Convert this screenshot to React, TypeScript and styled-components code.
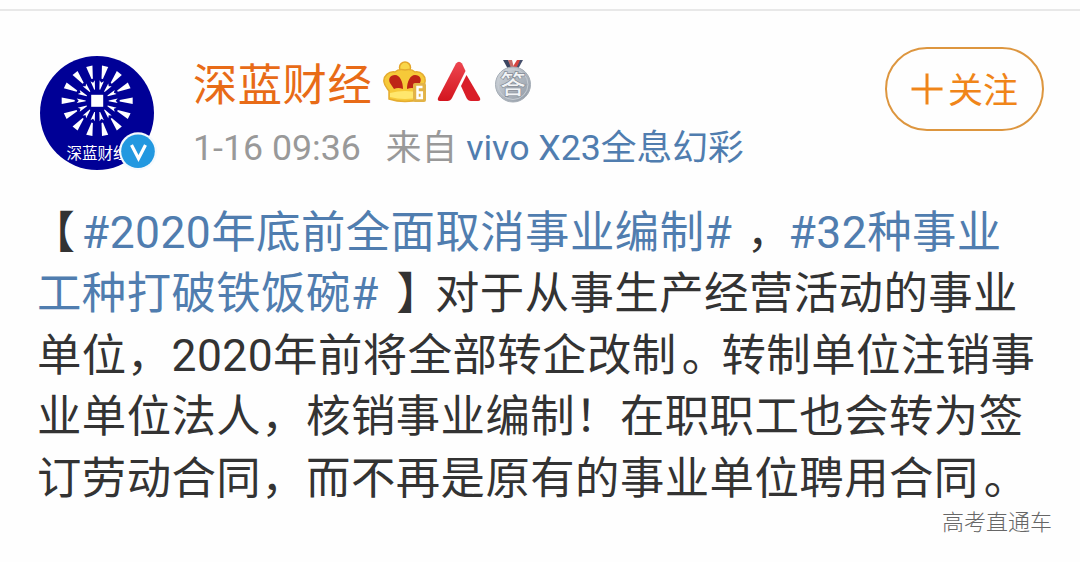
import React from "react";
import styled, { createGlobalStyle } from "styled-components";

const GlobalStyle = createGlobalStyle`
  * {
    box-sizing: border-box;
  }

  body {
    margin: 0;
    background: #fefefe;
    font-family: Roboto, "Noto Sans CJK SC", sans-serif;
  }
`;

const Page = styled.main`
  width: 1080px;
  height: 562px;
  overflow: hidden;
  display: flex;
  flex-direction: column;
`;

const Divider = styled.div`
  height: 2px;
  margin-top: 9px;
  flex-shrink: 0;
  background: #e8e8e8;
`;

const Header = styled.header`
  display: flex;
  height: 192px;
  padding: 36px 36px 0 39px;
  flex-shrink: 0;
`;

const Avatar = styled.svg`
  width: 120px;
  height: 130px;
  margin-top: 8px;
  flex-shrink: 0;
`;

const Author = styled.div`
  flex: 1;
  padding-left: 34px;
`;

const NameRow = styled.div`
  display: flex;
  align-items: center;
  height: 76px;
`;

const Name = styled.span`
  padding-top: 2px;
  font-size: 44.3px;
  letter-spacing: 0.5px;
  line-height: 76px;
  color: #e86b17;
  white-space: nowrap;
`;

const Badge = styled.svg<{ $gap: number }>`
  width: 44px;
  height: 44px;
  margin-left: ${({ $gap }) => $gap}px;
  margin-top: -6px;
  flex-shrink: 0;
`;

const Meta = styled.div`
  display: flex;
  height: 50px;
  line-height: 51px;
  font-size: 35.7px;
  color: #999;
  white-space: nowrap;
`;

const Source = styled.span`
  margin-left: 25px;
`;

const Link = styled.span`
  color: #507daf;
`;

const Device = styled(Link)`
  margin-left: 9px;
`;

const FollowButton = styled.button`
  display: flex;
  align-items: center;
  justify-content: center;
  gap: 5px;
  width: 159px;
  height: 84px;
  padding: 0;
  border: 2px solid #dd963f;
  border-radius: 42px;
  background: transparent;
  font-family: inherit;
  font-size: 35px;
  line-height: 50px;
  color: #f08519;
`;

const FollowLabel = styled.span`
  padding-top: 5px;
`;

const Plus = styled.svg`
  width: 32px;
  height: 32px;
`;

const Post = styled.article`
  padding-left: 37px;
  font-size: 44.4px;
  letter-spacing: 0.45px;
  color: #333;
`;

const Line = styled.p`
  margin: 0;
  height: 61.4px;
  line-height: 61.4px;
  white-space: nowrap;
`;

/* half-width mark, the rest of its em is split between the two sides */
const Mark = styled.span<{ $before: number }>`
  font-feature-settings: "halt";
  margin-left: ${({ $before }) => $before}px;
  margin-right: ${({ $before }) => 22.2 - $before}px;
`;

const Credit = styled.footer`
  margin-top: -6px;
  padding-right: 28px;
  text-align: right;
  font-family: "Noto Sans CJK SC", sans-serif;
  font-size: 22px;
  line-height: 32px;
  font-weight: 300;
  color: #666;
`;

const RAYS = Array.from({ length: 14 }, (_, i) => (i * 360) / 14);

const Logo = () => (
  <Avatar viewBox="0 0 120 130">
    <circle cx="58" cy="58" r="57" fill="#000096" />
    <g transform="translate(58.2 45.800)" fill="#fff">
      {RAYS.map((angle) => (
        <g key={angle} transform={`rotate(${angle})`}>
          <path d="M22.500 -.7L35.500 -3.200V3.200L22.500 .7Z" />
          <path d="M11.500 -.4L20.500 -2.200L18.500 0L20.500 2.200L11.500 .4Z" />
        </g>
      ))}
      <rect x="-6" y="-6" width="12" height="12" />
    </g>
    <text x="27.500" y="104" fontSize="15.500" fill="#fff">
      深蓝财经
    </text>
    <circle cx="99" cy="96.300" r="19" fill="#f4f9fd" />
    <circle cx="99" cy="96.300" r="16.800" fill="#2298e0" />
    <path d="M92.500 90L99.500 103.500L106.500 90" fill="none" stroke="#fff" strokeWidth="3.200" />
  </Avatar>
);

const Crown = () => (
  <Badge $gap={11} viewBox="0 0 44 44">
    <circle cx="22" cy="7.5" r="5.5" fill="#f9d64a" stroke="#e4a529" strokeWidth="1.5" />
    <path
      d="M22 10C26 9 30 10 32 12C38 11 43 16 42 22C41.500 26 39 28 38 31V39Q22 44 6 39V31C4 28 1.500 26 1 22C0 16 6 11 12 12C14 10 18 9 22 10Z"
      fill="#f6c939"
      stroke="#e5ac30"
      strokeWidth="1.5"
    />
    <path d="M20 29C20 22 17 15 12 15C7 15 5 19 7 23L11 29Q15 27 20 29Z" fill="#be2416" />
    <path d="M24 29C24 22 27 15 32 15C37 15 39 19 37 23L33 29Q29 27 24 29Z" fill="#be2416" />
    <path d="M7 33Q22 29 37 33V37Q22 41 7 37Z" fill="#ffe76d" />
    <rect x="30" y="23" width="13" height="19" rx="2" fill="#e2b347" />
    <path d="M39.500 27H34.500V38H38.800V32.500H34.500" fill="none" stroke="#fff" strokeWidth="2.5" />
  </Badge>
);

const Triangle = () => (
  <Badge $gap={10} viewBox="0 0 44 44">
    <defs>
      <linearGradient id="red" x1="0" y1="0" x2="0" y2="1">
        <stop offset="0" stopColor="#ed4650" />
        <stop offset="1" stopColor="#d3151e" />
      </linearGradient>
    </defs>
    <path d="M19 3.500Q22 0 25 3.500L28.500 11L15 38Q13.500 41 10.500 41H3Q0 41 1 38Z" fill="url(#red)" />
    <path d="M29.500 15L43 38Q44 41 41 41H34Q31 41 29.500 38L24 26Z" fill="#d91d28" />
  </Badge>
);

const Medal = () => (
  <Badge $gap={10} viewBox="0 0 44 44">
    <defs>
      <linearGradient id="silver" x1="0" y1="0" x2="1" y2="1">
        <stop offset="0" stopColor="#d4d9df" />
        <stop offset="1" stopColor="#8f98a3" />
      </linearGradient>
    </defs>
    <path d="M12 0H17L22 8L17 9Z" fill="#3b4560" />
    <path d="M17 0H21L23 8H20Z" fill="#c76b66" />
    <path d="M31 0H26L21 8L26 9Z" fill="#d8443f" />
    <path d="M29 0H32L27 9H25Z" fill="#46506c" />
    <circle cx="22" cy="24.500" r="17.5" fill="url(#silver)" stroke="#a5adb6" />
    <circle cx="22" cy="24.500" r="15" fill="none" stroke="#c7cdd4" />
    <text x="22" y="34" fontSize="26" fontWeight="700" textAnchor="middle" fill="#f2f4f6" stroke="#7c8590" strokeWidth=".6">
      答
    </text>
  </Badge>
);

const App: React.FC = () => {
  return (
    <Page>
      <GlobalStyle />
      <Divider />
      <Header>
        <Logo />
        <Author>
          <NameRow>
            <Name>深蓝财经</Name>
            <Crown />
            <Triangle />
            <Medal />
          </NameRow>
          <Meta>
            <span>1-16 09:36</span>
            <Source>来自</Source>
            <Device>vivo X23全息幻彩</Device>
          </Meta>
        </Author>
        <FollowButton>
          <Plus viewBox="0 0 32 32">
            <path d="M0.5 16H31.5M16 0.5V31.5" stroke="currentColor" strokeWidth="3" />
          </Plus>
          <FollowLabel>关注</FollowLabel>
        </FollowButton>
      </Header>
      <Post>
        <Line>
          <Mark $before={16}>【</Mark>
          <Link>#2020年底前全面取消事业编制#</Link> <Mark $before={3}>，</Mark>
          <Link>#32种事业</Link>
        </Line>
        <Line>
          <Link>工种打破铁饭碗#</Link> <Mark $before={6}>】</Mark>对于从事生产经营活动的事业
        </Line>
        <Line>
          单位，2020年前将全部转企改制<Mark $before={5}>。</Mark>转制单位注销事
        </Line>
        <Line>业单位法人，核销事业编制！在职职工也会转为签</Line>
        <Line>
          订劳动合同，而不再是原有的事业单位聘用合同<Mark $before={5}>。</Mark>
        </Line>
      </Post>
      <Credit>高考直通车</Credit>
    </Page>
  );
};

export default App;
